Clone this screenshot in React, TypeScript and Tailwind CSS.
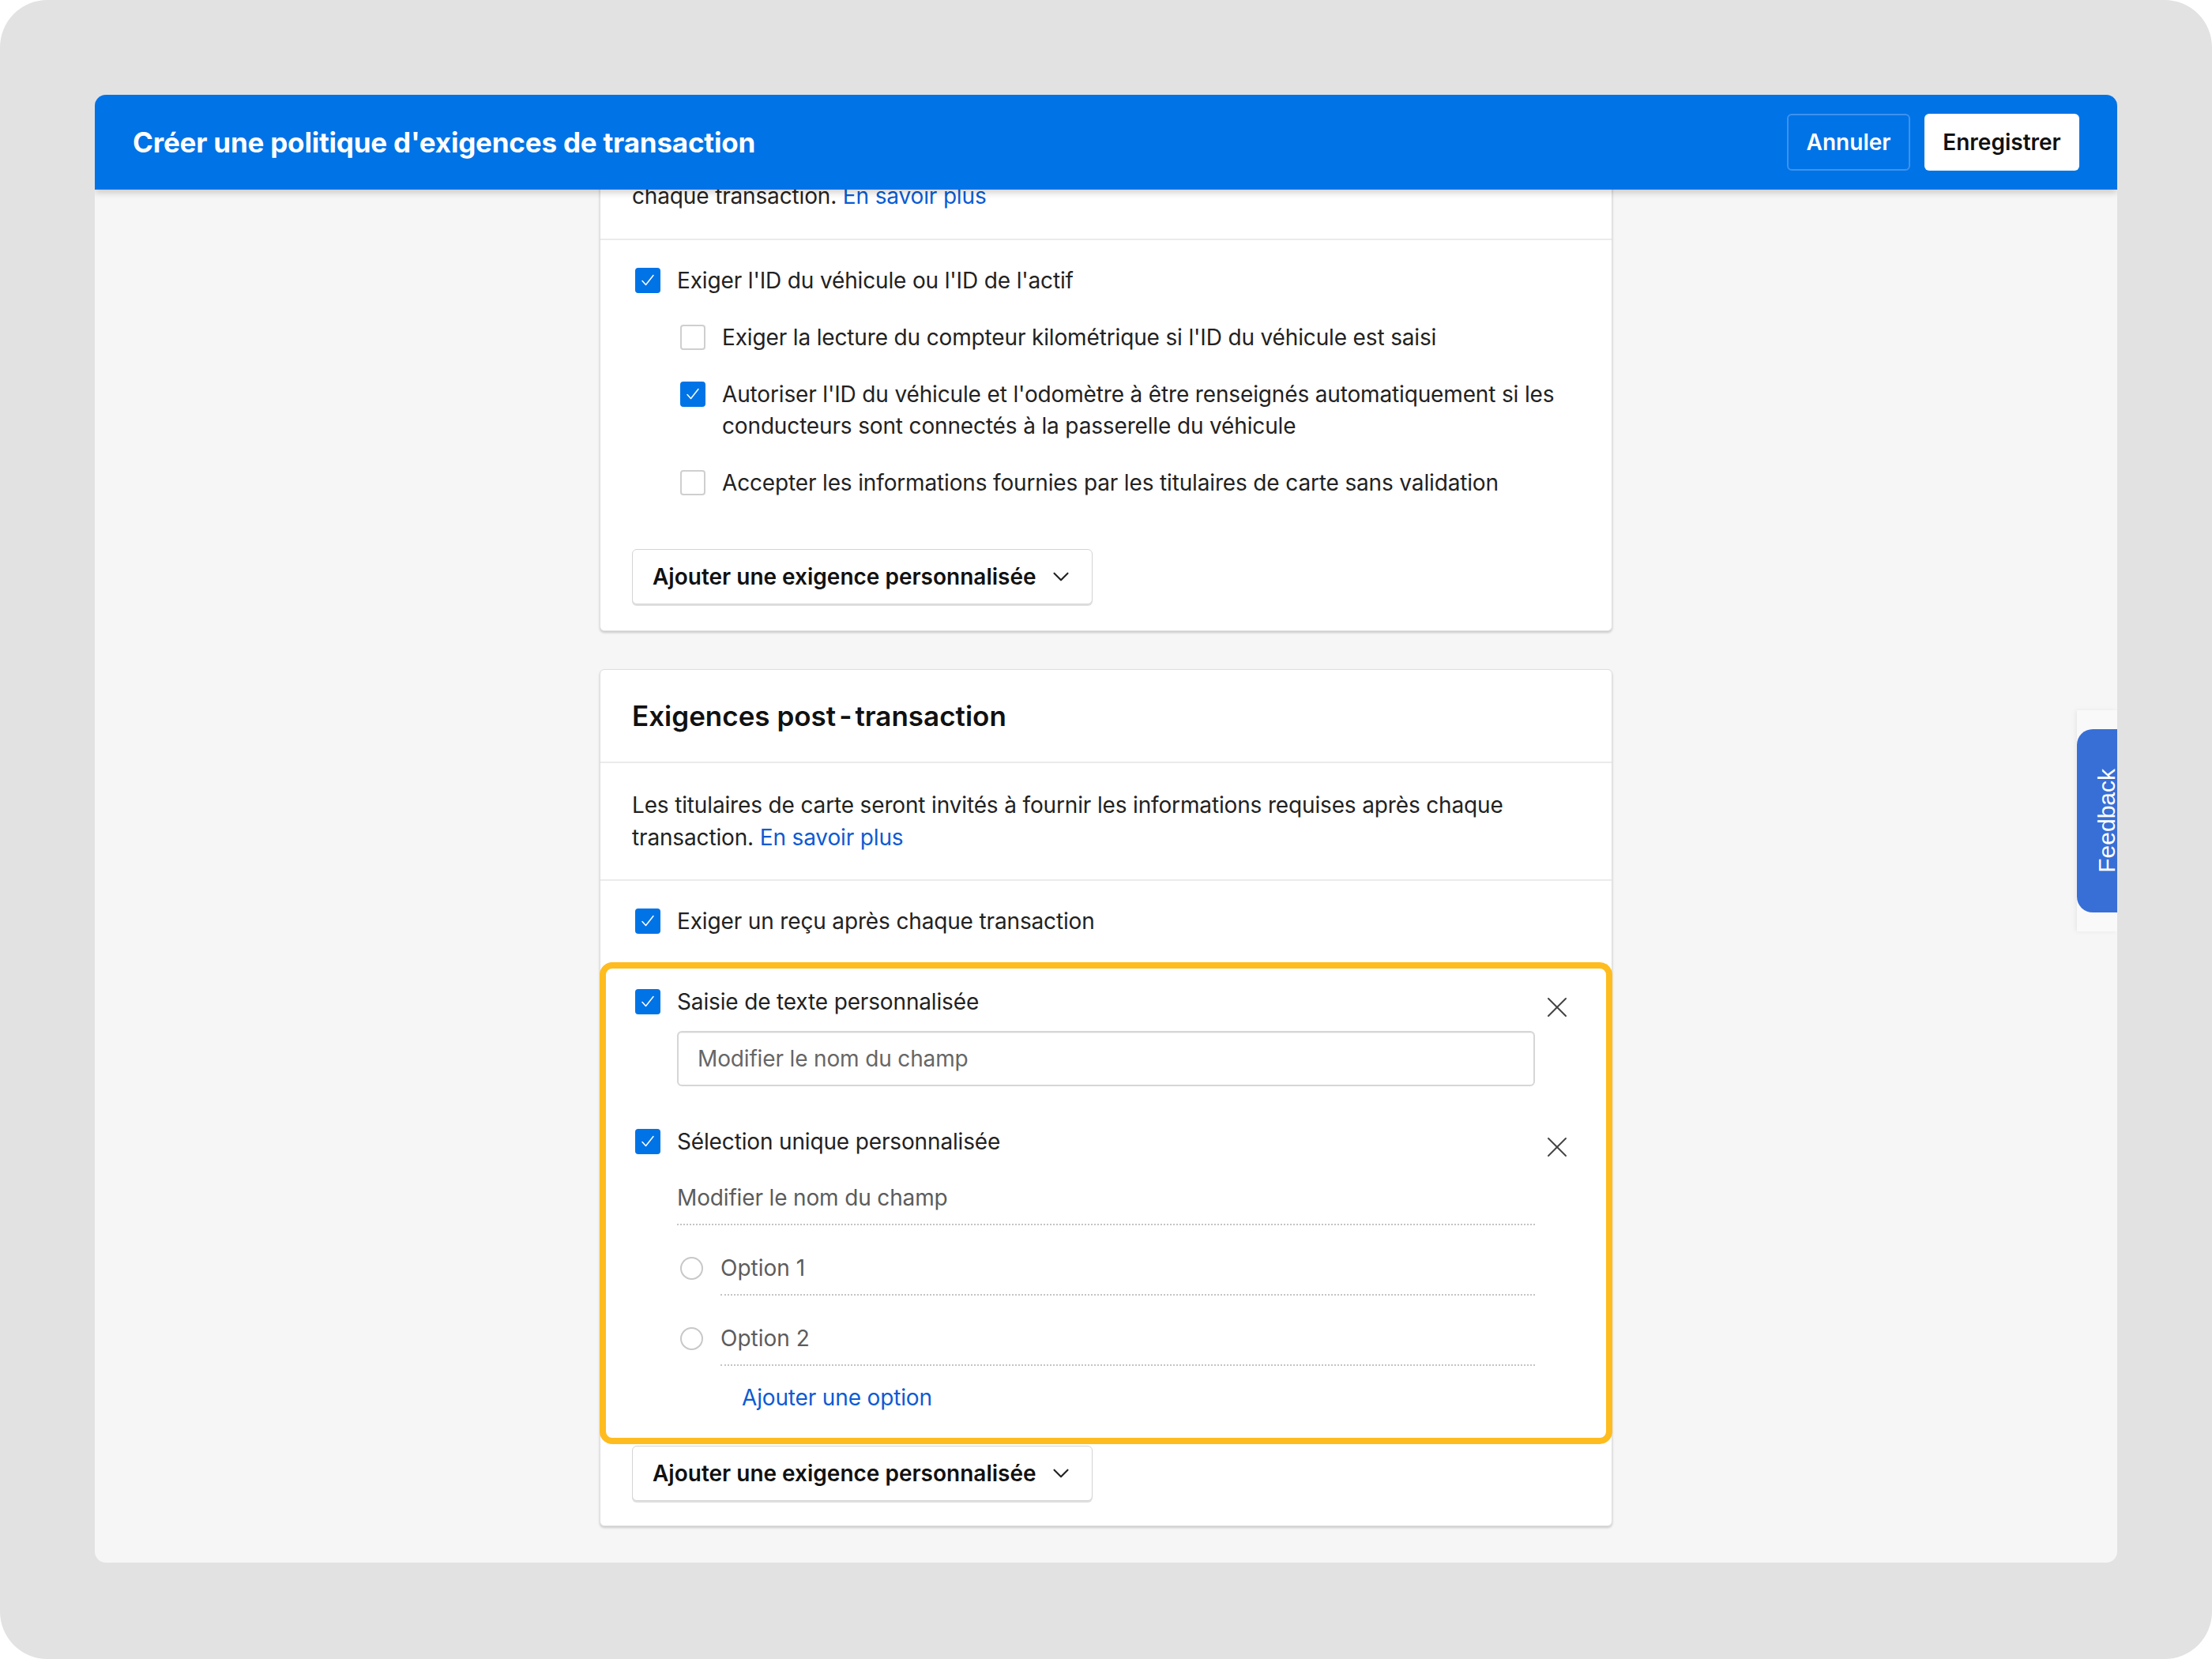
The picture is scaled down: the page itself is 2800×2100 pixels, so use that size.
import { ChevronDown, X } from "lucide-react";

const Checkbox = ({ checked }: { checked: boolean }) =>
  checked ? (
    <span className="ml-[4px] mt-[4px] flex h-[32px] w-[32px] shrink-0 items-center justify-center rounded-[4px] bg-[#0073e6]">
      <svg width="26" height="26" viewBox="0 0 26 26" fill="none">
        <path d="M6 13.5l4.5 5L20 6.5" stroke="white" strokeWidth="1.5" strokeLinecap="round" strokeLinejoin="round" />
      </svg>
    </span>
  ) : (
    <span className="ml-[4px] mt-[4px] h-[32px] w-[32px] shrink-0 rounded-[4px] border-2 border-[#cfcfcf] bg-white" />
  );

const CheckRow = ({ checked, children }: { checked: boolean; children: React.ReactNode }) => (
  <div className="flex items-start gap-[21px]">
    <Checkbox checked={checked} />
    <span className="text-[28px] leading-[40px] tracking-[-0.15px] text-[#222]">{children}</span>
  </div>
);

const AddButton = () => (
  <button className="flex h-[70px] items-center gap-[14px] rounded-[6px] border border-[#d4d4d4] bg-white pl-[25px] pr-[22px] shadow-[0_2px_0_rgba(0,0,0,0.12)]">
    <span className="text-[28px] font-semibold text-[#111]">Ajouter une exigence personnalisée</span>
    <ChevronDown size={34} strokeWidth={1.5} className="text-[#222]" />
  </button>
);

const Radio = () => <span className="h-[29px] w-[29px] shrink-0 rounded-full border-2 border-[#c8c8c8] bg-white" />;

// the close icon sits a little below the label line without pushing the row taller
const Close = () => (
  <div className="mr-[8px] h-[40px] w-[44px]">
    <X size={44} strokeWidth={1.1} className="mt-[5px] text-[#444]" />
  </div>
);

export default function App() {
  return (
    <div className="h-[2100px] w-[2800px] bg-white font-['Inter',sans-serif]">
      <div className="h-full w-full rounded-[60px] bg-[#e2e2e2] px-[120px] pt-[120px]">
        {/* window */}
        <div className="relative flex h-[1858px] flex-col overflow-hidden rounded-[14px] bg-[#f6f6f6]">
          {/* header */}
          <div className="relative z-10 flex h-[120px] shrink-0 items-center justify-between bg-[#0073e6] pl-[48px] pr-[48px] shadow-[0_4px_8px_rgba(0,0,0,0.18)]">
            <h1 className="text-[35px] font-bold tracking-[-0.2px] text-white">Créer une politique d'exigences de transaction</h1>
            <div className="flex gap-[18px]">
              <button className="h-[72px] w-[156px] rounded-[6px] border-2 border-[#3d93ee] text-[28px] font-semibold text-white">Annuler</button>
              <button className="h-[72px] w-[196px] rounded-[6px] bg-white text-[28px] font-semibold text-[#111]">Enregistrer</button>
            </div>
          </div>

          {/* scrolled content */}
          <div className="flex-1 overflow-hidden">
            <div className="mx-auto flex w-[1282px] flex-col gap-[48px]">
              {/* card 1 (scrolled) */}
              <div className="-mt-[12px] rounded-b-[6px] border border-t-0 border-[#dedede] bg-white shadow-[0_2px_3px_rgba(0,0,0,0.18)]">
                <div className="border-b-2 border-[#ebebeb] px-[40px] pb-[34px]">
                  <p className="text-[28px] leading-[40px] tracking-[-0.15px] text-[#222]">
                    chaque transaction. <span className="text-[#0b5bd3]">En savoir plus</span>
                  </p>
                </div>
                <div className="px-[40px] pb-[33px] pt-[31px]">
                  <div className="flex flex-col gap-[32px]">
                    <CheckRow checked>Exiger l'ID du véhicule ou l'ID de l'actif</CheckRow>
                    <div className="flex flex-col gap-[32px] pl-[57px] pr-[20px]">
                      <CheckRow checked={false}>Exiger la lecture du compteur kilométrique si l'ID du véhicule est saisi</CheckRow>
                      <CheckRow checked>
                        Autoriser l'ID du véhicule et l'odomètre à être renseignés automatiquement si les conducteurs sont connectés à la passerelle du véhicule
                      </CheckRow>
                      <CheckRow checked={false}>Accepter les informations fournies par les titulaires de carte sans validation</CheckRow>
                    </div>
                  </div>
                  <div className="mt-[64px] flex">
                    <AddButton />
                  </div>
                </div>
              </div>

              {/* card 2 */}
              <div className="rounded-[6px] border border-[#dedede] bg-white shadow-[0_2px_3px_rgba(0,0,0,0.18)]">
                <div className="border-b-2 border-[#ebebeb] px-[40px] pb-[36px] pt-[36px]">
                  <h2 className="text-[35px] font-semibold leading-[44px] text-[#111]">
                    Exigences post<span className="mx-[4px]">-</span>transaction
                  </h2>
                </div>
                <div className="border-b-2 border-[#ebebeb] px-[40px] pb-[32px] pt-[33px]">
                  <p className="pr-[80px] text-[28px] leading-[41px] tracking-[-0.15px] text-[#222]">
                    Les titulaires de carte seront invités à fournir les informations requises après chaque transaction.{" "}
                    <span className="text-[#0b5bd3]">En savoir plus</span>
                  </p>
                </div>
                <div className="px-[40px] pb-[31px] pt-[31px]">
                  <CheckRow checked>Exiger un reçu après chaque transaction</CheckRow>

                  {/* highlighted block */}
                  <div className="-mx-[41px] mt-[32px] rounded-[16px] border-[8px] border-[#ffbc1f] pb-[31px] pl-[33px] pr-[32px] pt-[22px]">
                    <div className="flex items-start justify-between">
                      <CheckRow checked>Saisie de texte personnalisée</CheckRow>
                      <Close />
                    </div>
                    <div className="ml-[57px] mr-[58px] mt-[17px] flex h-[70px] items-center rounded-[6px] border-2 border-[#d6d6d6] px-[24px] shadow-[inset_0_1px_0_rgba(0,0,0,0.06)]">
                      <span className="text-[28px] tracking-[-0.15px] text-[#666]">Modifier le nom du champ</span>
                    </div>

                    <div className="mt-[50px] flex items-start justify-between">
                      <CheckRow checked>Sélection unique personnalisée</CheckRow>
                      <Close />
                    </div>
                    <div className="ml-[57px] mr-[58px] mt-[31px] border-b-2 border-dotted border-[#c4c4c4] pb-[13px]">
                      <span className="text-[28px] leading-[40px] tracking-[-0.15px] text-[#5c5c5c]">Modifier le nom du champ</span>
                    </div>
                    <div className="ml-[61px] mr-[58px] mt-[34px] flex items-center gap-[22px]">
                      <Radio />
                      <span className="text-[28px] leading-[40px] text-[#5c5c5c]">Option 1</span>
                    </div>
                    <div className="ml-[112px] mr-[58px] mt-[13px] border-b-2 border-dotted border-[#c4c4c4]" />
                    <div className="ml-[61px] mr-[58px] mt-[34px] flex items-center gap-[22px]">
                      <Radio />
                      <span className="text-[28px] leading-[40px] text-[#5c5c5c]">Option 2</span>
                    </div>
                    <div className="ml-[112px] mr-[58px] mt-[13px] border-b-2 border-dotted border-[#c4c4c4]" />
                    <div className="ml-[139px] mt-[20px] text-[28px] leading-[40px] tracking-[-0.15px] text-[#0b5bd3]">Ajouter une option</div>
                  </div>

                  <div className="mt-[2px] flex">
                    <AddButton />
                  </div>
                </div>
              </div>
            </div>
          </div>

          {/* feedback tab */}
          <div className="absolute right-0 top-[779px] flex h-[280px] w-[51px] items-center bg-[#f9f9f9] shadow-[-2px_0_6px_rgba(0,0,0,0.06)]">
            <div className="flex h-[232px] w-[76px] shrink-0 items-center justify-center rounded-l-[20px] bg-[#386fd6]">
              <span className="mr-[2px] rotate-180 font-['Liberation_Sans',sans-serif] text-[30px] text-white [writing-mode:vertical-rl]">
                Feedback
              </span>
            </div>
          </div>
        </div>
      </div>
    </div>
  );
}
